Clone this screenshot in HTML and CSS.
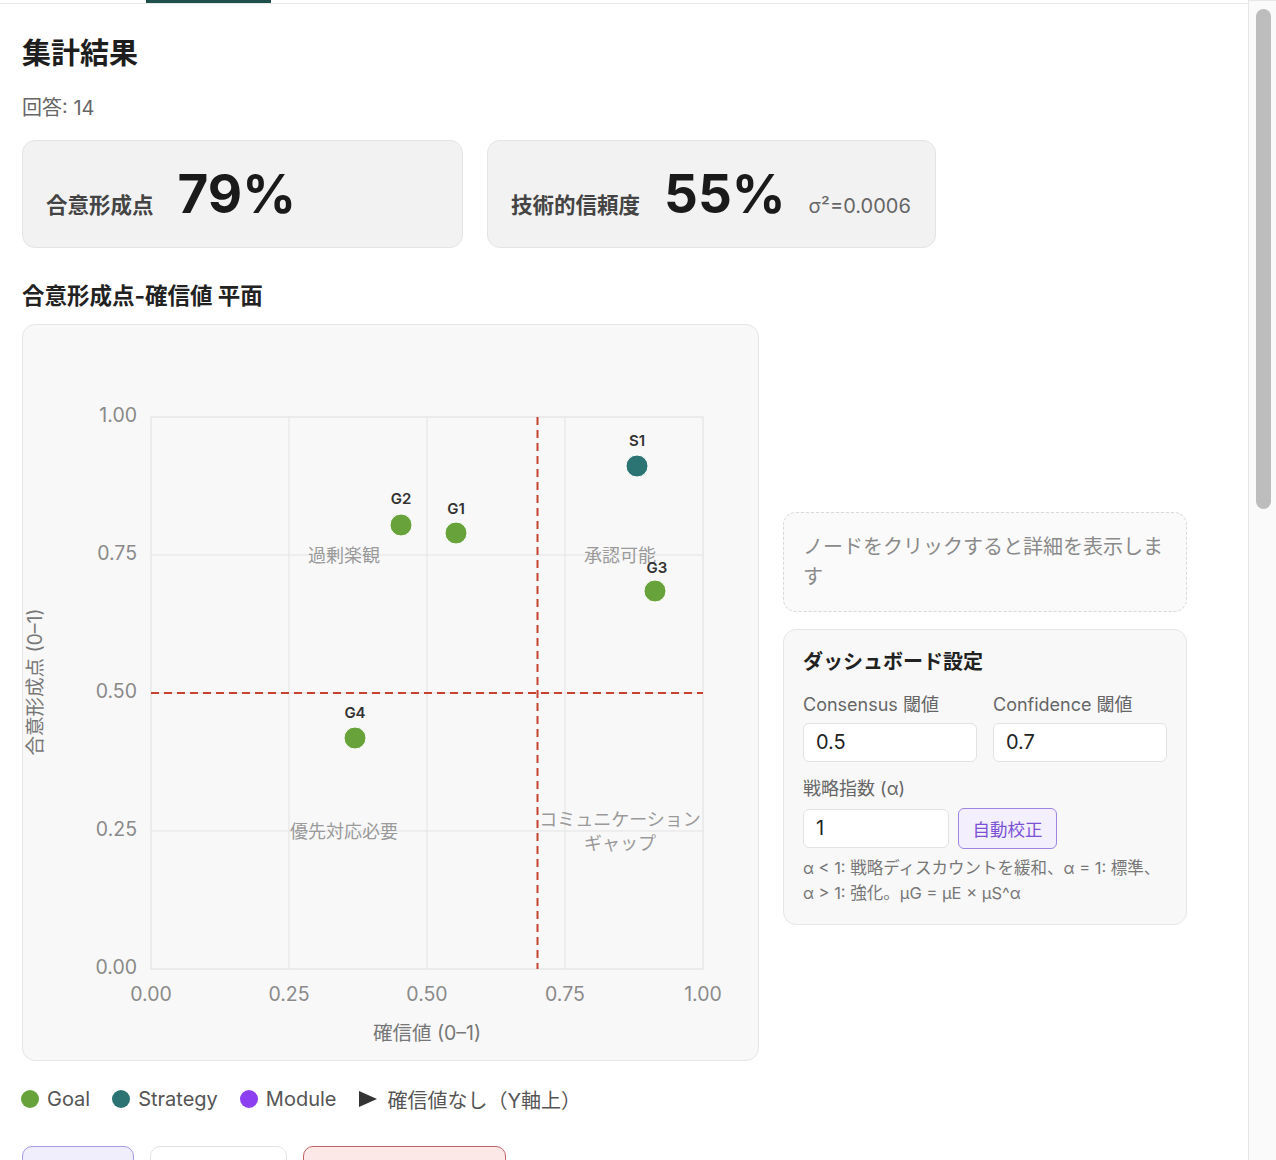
FILE: index.html
```html
<!DOCTYPE html>
<html lang="ja">
<head>
<meta charset="utf-8">
<title>集計結果</title>
<link rel="stylesheet" href="styles.css">
</head>
<body>
<div class="app">
  <main class="main">
    <div class="tabs"><span class="tab-active"></span></div>
    <h1 class="title">集計結果</h1>
    <p class="count">回答: 14</p>
    <div class="stats">
      <div class="stat stat-wide">
        <span class="stat-label">合意形成点</span>
        <span class="stat-value">79%</span>
      </div>
      <div class="stat">
        <span class="stat-label">技術的信頼度</span>
        <span class="stat-value">55%</span>
        <span class="stat-note">σ²=0.0006</span>
      </div>
    </div>
    <h2 class="section-title">合意形成点-確信値 平面</h2>
    <div class="plane">
      <div class="plane-main">
        <div class="chart-card">
          <svg class="plot" width="735" height="735" viewBox="0 0 735 735">
            <rect x="128" y="92" width="552" height="552" fill="none" stroke="#dedede" stroke-width="1"/>
            <g stroke="#e3e3e3" stroke-width="1">
              <line x1="266" y1="92" x2="266" y2="644"/>
              <line x1="404" y1="92" x2="404" y2="644"/>
              <line x1="542" y1="92" x2="542" y2="644"/>
              <line x1="128" y1="230" x2="680" y2="230"/>
              <line x1="128" y1="368" x2="680" y2="368"/>
              <line x1="128" y1="506" x2="680" y2="506"/>
            </g>
            <g class="tick" text-anchor="end">
              <text x="114" y="92" dominant-baseline="middle">1.00</text>
              <text x="114" y="230" dominant-baseline="middle">0.75</text>
              <text x="114" y="368" dominant-baseline="middle">0.50</text>
              <text x="114" y="506" dominant-baseline="middle">0.25</text>
              <text x="114" y="644" dominant-baseline="middle">0.00</text>
            </g>
            <g class="tick" text-anchor="middle">
              <text x="128" y="671" dominant-baseline="middle">0.00</text>
              <text x="266" y="671" dominant-baseline="middle">0.25</text>
              <text x="404" y="671" dominant-baseline="middle">0.50</text>
              <text x="542" y="671" dominant-baseline="middle">0.75</text>
              <text x="680" y="671" dominant-baseline="middle">1.00</text>
            </g>
            <text class="axis-title" x="404" y="710" text-anchor="middle" dominant-baseline="middle">確信値 (0–1)</text>
            <text class="axis-title" x="0" y="0" text-anchor="middle" dominant-baseline="middle" transform="translate(14 357) rotate(-90)">合意形成点 (0–1)</text>
            <g class="quad" text-anchor="middle">
              <text x="321" y="232" dominant-baseline="middle">過剰楽観</text>
              <text x="597" y="232" dominant-baseline="middle">承認可能</text>
              <text x="321" y="508" dominant-baseline="middle">優先対応必要</text>
              <text x="597" y="496" dominant-baseline="middle">コミュニケーション</text>
              <text x="597" y="520" dominant-baseline="middle">ギャップ</text>
            </g>
            <g stroke="#c8432f" stroke-width="2" stroke-dasharray="8 5">
              <line x1="514.5" y1="92" x2="514.5" y2="644"/>
              <line x1="128" y1="368" x2="680" y2="368"/>
            </g>
            <g class="pt">
              <circle cx="378" cy="200" r="11" fill="#67a33a" stroke="#ffffff" stroke-width="1"/>
              <text x="378" y="175" text-anchor="middle" dominant-baseline="middle">G2</text>
              <circle cx="433" cy="208" r="11" fill="#67a33a" stroke="#ffffff" stroke-width="1"/>
              <text x="433" y="185" text-anchor="middle" dominant-baseline="middle">G1</text>
              <circle cx="614" cy="141" r="11" fill="#2b7473" stroke="#ffffff" stroke-width="1"/>
              <text x="614" y="117" text-anchor="middle" dominant-baseline="middle">S1</text>
              <circle cx="632" cy="266" r="11" fill="#67a33a" stroke="#ffffff" stroke-width="1"/>
              <text x="634" y="244" text-anchor="middle" dominant-baseline="middle">G3</text>
              <circle cx="332" cy="413" r="11" fill="#67a33a" stroke="#ffffff" stroke-width="1"/>
              <text x="332" y="389" text-anchor="middle" dominant-baseline="middle">G4</text>
            </g>
          </svg>
        </div>
        <div class="legend">
          <span class="legend-item"><span class="dot dot-goal"></span>Goal</span>
          <span class="legend-item"><span class="dot dot-strategy"></span>Strategy</span>
          <span class="legend-item"><span class="dot dot-module"></span>Module</span>
          <span class="legend-item"><svg class="tri" width="20" height="18" viewBox="0 0 20 18"><path d="M1 1 L19 9 L1 17 Z" fill="#333"/></svg>確信値なし（Y軸上）</span>
        </div>
      </div>
      <aside class="side">
        <div class="hint">ノードをクリックすると詳細を表示します</div>
        <section class="settings">
          <h3 class="settings-title">ダッシュボード設定</h3>
          <div class="field-grid">
            <label class="field">
              <span class="field-label">Consensus 閾値</span>
              <span class="input">0.5</span>
            </label>
            <label class="field">
              <span class="field-label">Confidence 閾値</span>
              <span class="input">0.7</span>
            </label>
          </div>
          <div class="field">
            <span class="field-label">戦略指数 (α)</span>
            <div class="alpha-row">
              <span class="input input-alpha">1</span>
              <button class="btn-calib">自動校正</button>
            </div>
          </div>
          <p class="help">α &lt; 1: 戦略ディスカウントを緩和、α = 1: 標準、<br>α &gt; 1: 強化。μG = μE × μS^α</p>
        </section>
      </aside>
    </div>
    <div class="actions">
      <button class="btn btn-primary" aria-label="CSV出力"></button>
      <button class="btn btn-plain" aria-label="JSON出力"></button>
      <button class="btn btn-danger" aria-label="回答をリセット"></button>
    </div>
  </main>
  <div class="scrollbar"><div class="thumb"></div></div>
</div>
</body>
</html>
```
FILE: styles.css
```css
* { box-sizing: border-box; }
html, body { margin: 0; padding: 0; background: #ffffff; }
body {
  font-family: Inter, "Noto Sans CJK JP", sans-serif;
  color: #222222;
}
.app {
  display: flex;
  height: 1160px;
  overflow: hidden;
}
.main {
  flex: 1;
  min-width: 0;
  overflow: hidden;
  padding: 0 22px;
}
.tabs {
  display: flex;
  height: 4px;
  margin: 0 -22px;
  border-bottom: 1px solid #e7e7e7;
}
.tab-active {
  display: block;
  width: 125px;
  height: 3px;
  margin-left: 146px;
  background: #1f4f4b;
}
.title {
  margin: 30px 0 0;
  font-size: 29px;
  line-height: 40px;
  font-weight: 700;
  color: #1e1e1e;
}
.count {
  margin: 20px 0 0;
  font-size: 20px;
  line-height: 28px;
  color: #666666;
}
.stats {
  display: flex;
  gap: 24px;
  margin-top: 18px;
}
.stat {
  display: flex;
  align-items: baseline;
  gap: 24px;
  padding: 20px 24px 20px 23px;
  background: #f2f2f2;
  border: 1px solid #e4e4e4;
  border-radius: 13px;
}
.stat-wide { width: 441px; }
.stat-label {
  font-size: 21.5px;
  font-weight: 700;
  color: #444444;
}
.stat-value {
  font-size: 53px;
  line-height: 66px;
  font-weight: 700;
  color: #1a1a1a;
}
.stat-note {
  font-size: 20px;
  color: #666666;
  margin-left: -1px;
}
.section-title {
  margin: 33px 0 0;
  font-size: 22.5px;
  line-height: 30px;
  font-weight: 700;
  color: #222222;
}
.plane {
  display: flex;
  align-items: center;
  gap: 24px;
  margin-top: 13px;
}
.plane-main {
  display: flex;
  flex-direction: column;
}
.chart-card {
  width: 737px;
  height: 737px;
  background: #f8f8f8;
  border: 1px solid #e6e6e6;
  border-radius: 13px;
}
.plot { display: block; }
.plot .tick {
  font-family: Inter, "Noto Sans CJK JP", sans-serif;
  font-size: 19.5px;
  fill: #8a8a8a;
}
.plot .axis-title {
  font-family: Inter, "Noto Sans CJK JP", sans-serif;
  font-size: 19.5px;
  fill: #777777;
}
.plot .quad {
  font-family: "Noto Sans CJK JP", sans-serif;
  font-size: 18px;
  fill: #9a9a9a;
}
.plot .pt text {
  font-family: Inter, sans-serif;
  font-size: 15px;
  font-weight: 600;
  fill: #333333;
}
.legend {
  display: flex;
  align-items: center;
  gap: 22px;
  margin-top: 25px;
  height: 26px;
  font-size: 20px;
  color: #555555;
}
.legend-item {
  display: inline-flex;
  align-items: center;
  gap: 8px;
}
.dot {
  display: inline-block;
  width: 18px;
  height: 18px;
  border-radius: 50%;
}
.legend-item:first-child .dot { margin-left: -1px; }
.dot-goal { background: #67a33a; }
.dot-strategy { background: #2b7473; }
.dot-module { background: #8b3ff0; }
.tri { display: block; margin-right: 1px; }
.side {
  width: 404px;
  display: flex;
  flex-direction: column;
  gap: 17px;
}
.hint {
  padding: 18px 19px 20px;
  border: 1px dashed #d9d9d9;
  border-radius: 13px;
  background: #fafafa;
  font-family: "Noto Sans CJK JP", sans-serif;
  font-size: 20px;
  line-height: 30px;
  color: #8a8a8a;
}
.settings {
  padding: 18px 19px 18px;
  border: 1px solid #e6e6e6;
  border-radius: 13px;
  background: #f8f8f8;
}
.settings-title {
  margin: 0 0 17px;
  font-size: 20px;
  line-height: 28px;
  font-weight: 700;
  color: #222222;
}
.field-grid {
  display: grid;
  grid-template-columns: 1fr 1fr;
  gap: 16px;
}
.field {
  display: flex;
  flex-direction: column;
  gap: 6px;
}
.field-grid + .field { margin-top: 15px; }
.field-label {
  font-size: 18px;
  line-height: 24px;
  color: #666666;
}
.input {
  display: flex;
  align-items: center;
  height: 39px;
  padding: 0 12px;
  background: #ffffff;
  border: 1px solid #e2e2e2;
  border-radius: 6px;
  font-size: 20px;
  color: #222222;
}
.alpha-row {
  display: flex;
  align-items: center;
  gap: 9px;
  margin-top: 1px;
}
.input-alpha { width: 146px; }
.btn-calib {
  height: 41px;
  width: 99px;
  padding: 0;
  border: 1.5px solid #9d86e2;
  border-radius: 6px;
  background: #f3effd;
  color: #7b52d6;
  font-family: "Noto Sans CJK JP", sans-serif;
  font-size: 17.5px;
}
.help {
  margin: 7px 0 0;
  font-size: 16.5px;
  line-height: 25px;
  color: #777777;
}
.actions {
  display: flex;
  gap: 16px;
  margin-top: 34px;
}
.btn {
  height: 46px;
  padding: 0;
  border-radius: 10px;
}
.btn-primary { width: 112px; background: #f0edfc; border: 1.5px solid #a89ae6; }
.btn-plain { width: 137px; background: #ffffff; border: 1.5px solid #e2e2e2; }
.btn-danger { width: 203px; background: #fde8e8; border: 1.5px solid #c46464; }
.scrollbar {
  width: 28px;
  flex: none;
  padding: 8px 6px 0 7px;
  background: #fafafa;
  border-left: 1px solid #e6e6e6;
  border-top: 1px solid #e7e7e7;
}
.thumb {
  height: 500px;
  width: 15px;
  border-radius: 8px;
  background: #bdbdbd;
}
```
